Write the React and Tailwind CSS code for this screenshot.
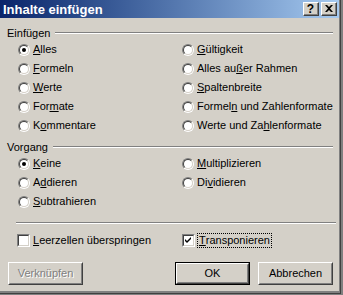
import React from 'react';

const font = { fontFamily: '"Liberation Sans", Arial, sans-serif' };

function Radio({ checked }) {
  return (
    <span className="w-3 h-3 shrink-0 flex rounded-full border border-t-[#808080] border-l-[#808080] border-b-white border-r-white">
      <span className="flex-1 flex items-center justify-center rounded-full border border-t-[#404040] border-l-[#404040] border-b-[#d4d0c8] border-r-[#d4d0c8] bg-white">
        {checked && <span className="w-1 h-1 rounded-full bg-black" />}
      </span>
    </span>
  );
}

function Check({ checked }) {
  return (
    <span className="w-[13px] h-[13px] shrink-0 flex border border-t-[#808080] border-l-[#808080] border-b-white border-r-white">
      <span className="flex-1 flex items-center justify-center border border-t-[#404040] border-l-[#404040] border-b-[#d4d0c8] border-r-[#d4d0c8] bg-white">
        {checked && (
          <svg width="7" height="7" viewBox="0 0 7 7">
            <path d="M0 2 L2 4 L6 0 L6 2 L2 6 L0 4 Z" fill="#000" />
          </svg>
        )}
      </span>
    </span>
  );
}

function Option({ checked, children }) {
  return (
    <div className="h-[19px] flex items-center gap-[3px]">
      <Radio checked={checked} />
      <span className="text-[11px] leading-none text-black">{children}</span>
    </div>
  );
}

function Etched({ className = '' }) {
  return <div className={`h-[2px] border-t border-t-[#808080] border-b border-b-white ${className}`} />;
}

function Header({ children }) {
  return (
    <div className="h-[14px] flex items-center pl-[7px] pr-[6px]">
      <span className="text-[11px] leading-none text-black">{children}</span>
      <Etched className="flex-1 ml-[5px]" />
    </div>
  );
}

function Button({ children, isDefault, disabled }) {
  const inner = (
    <div className="w-full h-full border border-t-white border-l-white border-b-[#404040] border-r-[#404040]">
      <div className="w-full h-full flex items-center justify-center border border-t-[#d4d0c8] border-l-[#d4d0c8] border-b-[#808080] border-r-[#808080]">
        <span
          className={`text-[11px] leading-none ${disabled ? 'text-[#808080] [text-shadow:1px_1px_0_#fff]' : 'text-black'}`}
        >
          {children}
        </span>
      </div>
    </div>
  );
  return (
    <div className={`w-[75px] h-[23px] ${isDefault ? 'border border-black' : ''}`}>{inner}</div>
  );
}

function TitleButton({ children }) {
  return (
    <div className="w-4 h-[14px] bg-[#d4d0c8] border border-t-white border-l-white border-b-[#404040] border-r-[#404040]">
      <div className="w-full h-full flex items-center justify-center border-b border-r border-b-[#808080] border-r-[#808080]">
        {children}
      </div>
    </div>
  );
}

export default function App() {
  return (
    <div className="w-[343px] h-[295px] bg-[#808080] flex flex-col" style={font}>
      <div className="flex">
        <div className="w-[339px] h-[291px] bg-[#d4d0c8] flex flex-col">
          {/* title bar */}
          <div className="h-[18px] flex items-center pl-[3px] pr-[2px] bg-gradient-to-r from-[#0a246a] to-[#a6caf0]">
            <span className="text-white font-bold text-[13px] leading-none flex-1">Inhalte einfügen</span>
            <div className="flex gap-[2px]">
              <TitleButton>
                <span className="text-[12px] font-bold leading-none text-black">?</span>
              </TitleButton>
              <TitleButton>
                <svg width="8" height="7" viewBox="0 0 8 7">
                  <path d="M0 0h2l2 2 2-2h2L5 3.5 8 7H6L4 5 2 7H0l3-3.5z" fill="#000" />
                </svg>
              </TitleButton>
            </div>
          </div>

          <div className="mt-[8px]">
            <Header>Einfügen</Header>
          </div>
          <div className="grid grid-cols-[164px_1fr] pl-[18px]">
            <div className="flex flex-col">
              <Option checked><u>A</u>lles</Option>
              <Option><u>F</u>ormeln</Option>
              <Option><u>W</u>erte</Option>
              <Option>For<u>m</u>ate</Option>
              <Option>K<u>o</u>mmentare</Option>
            </div>
            <div className="flex flex-col">
              <Option><u>G</u>ültigkeit</Option>
              <Option>Alles au<u>ß</u>er Rahmen</Option>
              <Option><u>S</u>paltenbreite</Option>
              <Option>Formel<u>n</u> und Zahlenformate</Option>
              <Option>Werte und Za<u>h</u>lenformate</Option>
            </div>
          </div>

          <div className="mt-[5px]">
            <Header>Vorgang</Header>
          </div>
          <div className="grid grid-cols-[164px_1fr] pl-[18px]">
            <div className="flex flex-col">
              <Option checked><u>K</u>eine</Option>
              <Option>A<u>d</u>dieren</Option>
              <Option><u>S</u>ubtrahieren</Option>
            </div>
            <div className="flex flex-col">
              <Option><u>M</u>ultiplizieren</Option>
              <Option>Di<u>v</u>idieren</Option>
            </div>
          </div>

          <Etched className="mt-[11px] ml-[16px] mr-[3px]" />

          <div className="mt-[9px] h-[15px] grid grid-cols-[165px_1fr] pl-[17px]">
            <div className="flex items-center gap-[3px]">
              <Check />
              <span className="text-[11px] leading-none text-black"><u>L</u>eerzellen überspringen</span>
            </div>
            <div className="flex items-center gap-[2px]">
              <Check checked />
              <span className="h-[15px] px-[1px] flex items-center border border-dotted border-black text-[11px] leading-none text-black">
                <u>T</u>ransponieren
              </span>
            </div>
          </div>

          <div className="mt-[14px] flex items-start pl-[8px] pr-[6px]">
            <Button disabled>Verknüpfen</Button>
            <div className="flex-1" />
            <Button isDefault>OK</Button>
            <div className="w-[8px]" />
            <Button>Abbrechen</Button>
          </div>
        </div>
        <div className="w-px h-[292px] bg-[#808080]" />
        <div className="w-px h-[293px] bg-[#404040]" />
      </div>
      <div className="h-px w-[341px] bg-[#404040]" />
    </div>
  );
}
